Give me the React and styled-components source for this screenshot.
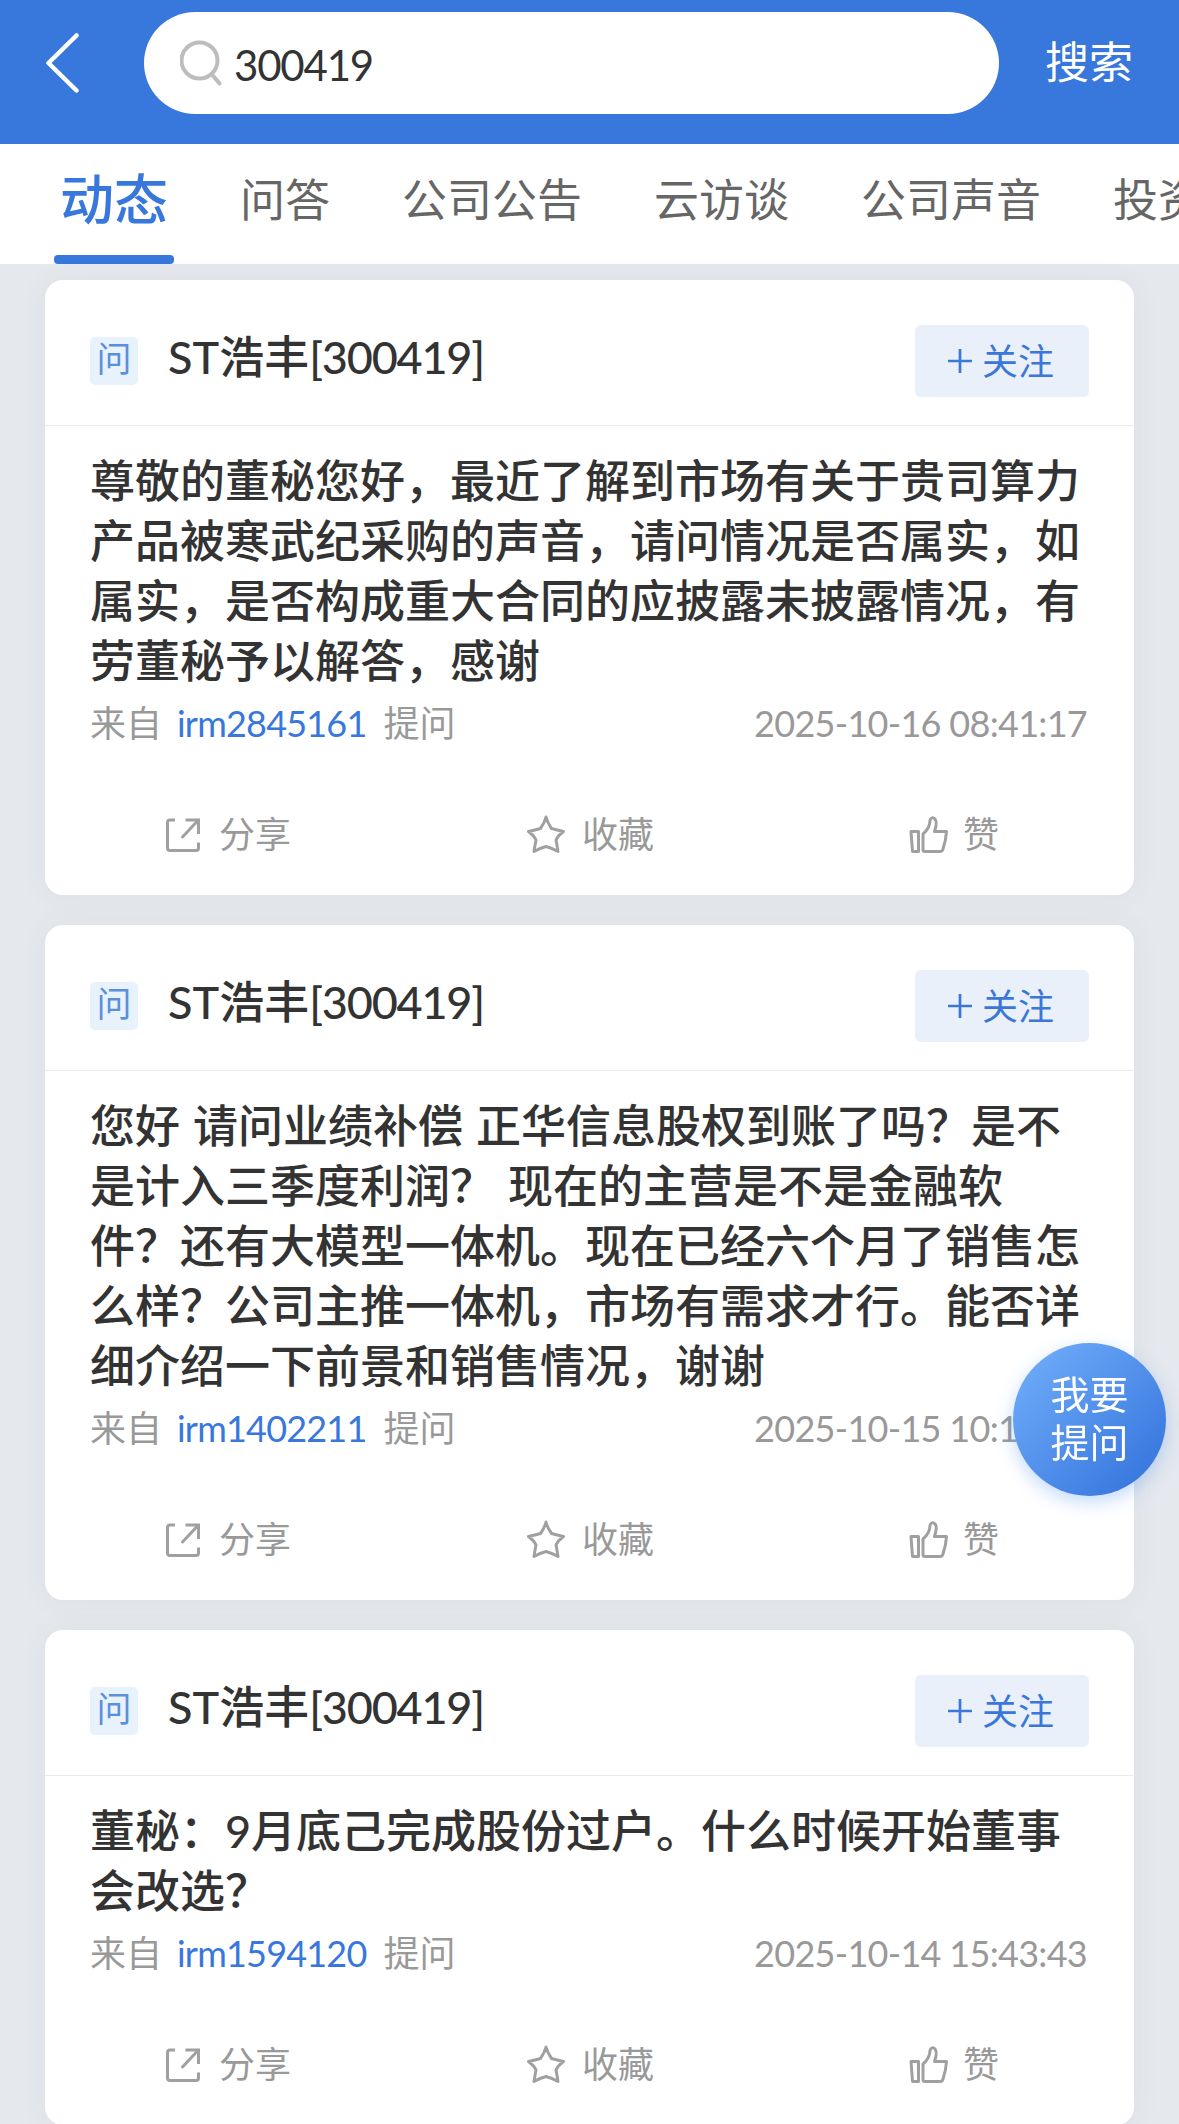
import React from 'react'
import styled, { createGlobalStyle } from 'styled-components'

const GlobalStyle = createGlobalStyle`
  * {
    box-sizing: border-box;
  }

  body {
    margin: 0;
    background-color: #e5e8ed;
    font-family: Lato, 'Noto Sans CJK SC', sans-serif;
    color: #333333;
  }
`

const Page = styled.div`
  width: 1179px;
  height: 2124px;
  overflow: hidden;
  background-color: #e5e8ed;
`

const Header = styled.header`
  height: 144px;
  padding: 12px 46px 30px 44px;
  display: flex;
  align-items: center;
  background-color: #3877db;
`

const BackButton = styled.button`
  width: 100px;
  height: 60px;
  padding: 0;
  border: none;
  background: transparent;
  display: flex;
`

const SearchBox = styled.div`
  width: 855px;
  height: 102px;
  padding: 0 36px;
  display: flex;
  align-items: center;
  gap: 12px;
  border-radius: 51px;
  background-color: #ffffff;
`

const Keyword = styled.span`
  padding-top: 4px;
  font-size: 42px;
  letter-spacing: -1.2px;
`

const SearchButton = styled.button`
  margin-left: auto;
  padding: 0 0 3px;
  border: none;
  background: transparent;
  color: #ffffff;
  font-family: inherit;
  font-size: 44px;
  line-height: 60px;
`

const Tabs = styled.nav`
  height: 120px;
  padding-left: 54px;
  display: flex;
  gap: 60px;
  overflow: hidden;
  background-color: #ffffff;
`

const Tab = styled.div`
  flex: none;
  height: 120px;
  padding: 0 6px;
  border-bottom: 9px solid transparent;
  color: #666666;
  font-size: 45px;
  line-height: 112px;
`

const ActiveTab = styled(Tab)`
  display: flex;
  flex-direction: column;
  justify-content: space-between;
  padding: 0;
  border: none;
  color: #3877db;
  font-size: 54px;
  font-weight: 500;
  line-height: 111px;
  text-align: center;

  &::after {
    content: '';
    width: 120px;
    height: 9px;
    border-radius: 4px;
    background-color: #3877db;
  }
`

const Feed = styled.main`
  padding: 16px 45px 0;
  display: flex;
  flex-direction: column;
  gap: 30px;
`

const Card = styled.article`
  border-radius: 18px;
  background-color: #ffffff;
  box-shadow: 0 0 30px rgba(90, 100, 110, 0.06);
`

const CardHeader = styled.div`
  height: 146px;
  padding: 0 45px;
  display: flex;
  align-items: center;
  border-bottom: 1px solid #ebebeb;
`

const Badge = styled.span`
  width: 48px;
  height: 48px;
  margin-top: 17px;
  border-radius: 5px;
  background-color: #e8f2fd;
  color: #5c8fdb;
  font-size: 35px;
  line-height: 43px;
  text-align: center;
`

const Company = styled.h2`
  margin: 8px 0 0 30px;
  font-size: 45px;
  font-weight: 500;
  line-height: 60px;
`

const Code = styled.span`
  letter-spacing: -1.2px;
`

const FollowButton = styled.button`
  width: 174px;
  height: 72px;
  margin: 16px 0 0 auto;
  padding: 0 2px 0 0;
  display: flex;
  align-items: center;
  justify-content: center;
  gap: 10px;
  border: none;
  border-radius: 6px;
  background-color: #e9f0f9;
  color: #3a77d8;
  font-family: inherit;
  font-size: 36px;
`

const FollowLabel = styled.span`
  padding-bottom: 4px;
`

const Question = styled.p`
  margin: 0;
  padding: 25px 45px 0;
  font-size: 45px;
  font-weight: 500;
  line-height: 60px;
  word-spacing: 1.6px;
`

const Line = styled.span`
  display: block;
  white-space: pre;
`

const Meta = styled.div`
  padding: 5px 47px 0 45px;
  display: flex;
  justify-content: space-between;
  color: #999999;
  font-size: 36px;
  line-height: 54px;
`

const User = styled.span`
  margin: 0 17px 0 15px;
  color: #3877db;
  letter-spacing: -0.8px;
`

const Time = styled.time`
  letter-spacing: -0.7px;
`

const Actions = styled.div`
  height: 145px;
  padding-top: 26px;
  display: grid;
  grid-template-columns: repeat(3, 1fr);
  align-items: center;
`

const Action = styled.button`
  padding: 0;
  display: flex;
  align-items: center;
  justify-content: center;
  gap: 15px;
  border: none;
  background: transparent;
  color: #999999;
  font-family: inherit;
  font-size: 36px;
  line-height: 54px;
`

const ActionLabel = styled.span`
  padding-bottom: 4px;
  line-height: 50px;
`

const AskButton = styled.button`
  position: fixed;
  top: 1343px;
  left: 1013px;
  width: 153px;
  height: 153px;
  padding: 0 0 3px;
  border: none;
  border-radius: 50%;
  background: linear-gradient(135deg, #70adfa 5%, #3473dc 95%);
  box-shadow: 0 6px 18px rgba(80, 150, 245, 0.35);
  color: #ffffff;
  font-family: inherit;
  font-size: 39px;
  line-height: 48px;
`

const posts = [
  {
    user: 'irm2845161',
    time: '2025-10-16 08:41:17',
    lines: [
      '尊敬的董秘您好，最近了解到市场有关于贵司算力',
      '产品被寒武纪采购的声音，请问情况是否属实，如',
      '属实，是否构成重大合同的应披露未披露情况，有',
      '劳董秘予以解答，感谢',
    ],
  },
  {
    user: 'irm1402211',
    time: '2025-10-15 10:17:21',
    lines: [
      '您好 请问业绩补偿 正华信息股权到账了吗？是不',
      '是计入三季度利润？ 现在的主营是不是金融软',
      '件？还有大模型一体机。现在已经六个月了销售怎',
      '么样？公司主推一体机，市场有需求才行。能否详',
      '细介绍一下前景和销售情况，谢谢',
    ],
  },
  {
    user: 'irm1594120',
    time: '2025-10-14 15:43:43',
    lines: [
      '董秘：9月底己完成股份过户。什么时候开始董事',
      '会改选？',
    ],
  },
]

const tabs = ['问答', '公司公告', '云访谈', '公司声音', '投资者关系']

const iconProps = {
  width: 42,
  height: 42,
  viewBox: '0 0 42 42',
  fill: 'none',
  stroke: '#a0a0a0',
  strokeWidth: 3,
  strokeLinecap: 'round',
  strokeLinejoin: 'round',
}

function ShareIcon() {
  return (
    <svg {...iconProps}>
      <path d="M13 5H8Q5.500 5 5.500 7.500V33Q5.500 35.500 8 35.500H34Q36.500 35.500 36.500 33V27.500" strokeLinecap="butt" />
      <path d="M23.500 5H36.500V19" strokeLinecap="butt" strokeLinejoin="miter" />
      <path d="M35.500 6 20.500 22" />
    </svg>
  )
}

function StarIcon() {
  return (
    <svg {...iconProps}>
      <path d="M21 2 Q22.500 8 26.500 13.500 Q32 15 38.500 16.500 Q33 20.500 31 25 Q32 30 33 36.500 Q27 33 21 31.500 Q15 33 9 36.500 Q10 30 11 25 Q9 20.500 3.500 16.500 Q10 15 15.500 13.500 Q19.500 8 21 2Z" />
    </svg>
  )
}

function LikeIcon() {
  return (
    <svg {...iconProps}>
      <path d="M5 16.500H12.500V36.500H6.500Z" />
      <path d="M17 19Q24 13 24 5.500Q25 1.500 28.500 3.500Q32 6 28.500 16.500H40.500Q40 25 37 34Q36.500 36.500 34 36.500H19Q17 36.500 17 34.500Z" />
    </svg>
  )
}

function PostCard({ post }) {
  return (
    <Card>
      <CardHeader>
        <Badge>问</Badge>
        <Company>
          ST浩丰<Code>[300419]</Code>
        </Company>
        <FollowButton type="button">
          <svg width="24" height="24" viewBox="0 0 24 24" stroke="currentColor" strokeWidth="2.7">
            <path d="M12 0V24M0 12H24" />
          </svg>
          <FollowLabel>关注</FollowLabel>
        </FollowButton>
      </CardHeader>
      <Question>
        {post.lines.map((line) => (
          <Line key={line}>{line}</Line>
        ))}
      </Question>
      <Meta>
        <span>
          来自<User>{post.user}</User>提问
        </span>
        <Time>{post.time}</Time>
      </Meta>
      <Actions>
        <Action type="button">
          <ShareIcon />
          <ActionLabel>分享</ActionLabel>
        </Action>
        <Action type="button">
          <StarIcon />
          <ActionLabel>收藏</ActionLabel>
        </Action>
        <Action type="button">
          <LikeIcon />
          <ActionLabel>赞</ActionLabel>
        </Action>
      </Actions>
    </Card>
  )
}

function App() {
  return (
    <Page>
      <GlobalStyle />
      <Header>
        <BackButton type="button" aria-label="返回">
          <svg width="36" height="60" viewBox="0 0 36 60" fill="none" stroke="#ffffff" strokeWidth="4.5" strokeLinecap="round" strokeLinejoin="round">
            <path d="M32.500 2.500 4.500 30 32.500 57.500" />
          </svg>
        </BackButton>
        <SearchBox>
          <svg width="42" height="46" viewBox="0 0 42 46" fill="none" stroke="#bdbdbd" strokeWidth="4" strokeLinecap="round">
            <circle cx="19.500" cy="20.500" r="18" />
            <path d="M32 34.500 39.500 43.500" />
          </svg>
          <Keyword>300419</Keyword>
        </SearchBox>
        <SearchButton type="button">搜索</SearchButton>
      </Header>
      <Tabs>
        <ActiveTab>动态</ActiveTab>
        {tabs.map((tab) => (
          <Tab key={tab}>{tab}</Tab>
        ))}
      </Tabs>
      <Feed>
        {posts.map((post) => (
          <PostCard key={post.user} post={post} />
        ))}
      </Feed>
      <AskButton type="button">
        我要
        <br />
        提问
      </AskButton>
    </Page>
  )
}

export default App
